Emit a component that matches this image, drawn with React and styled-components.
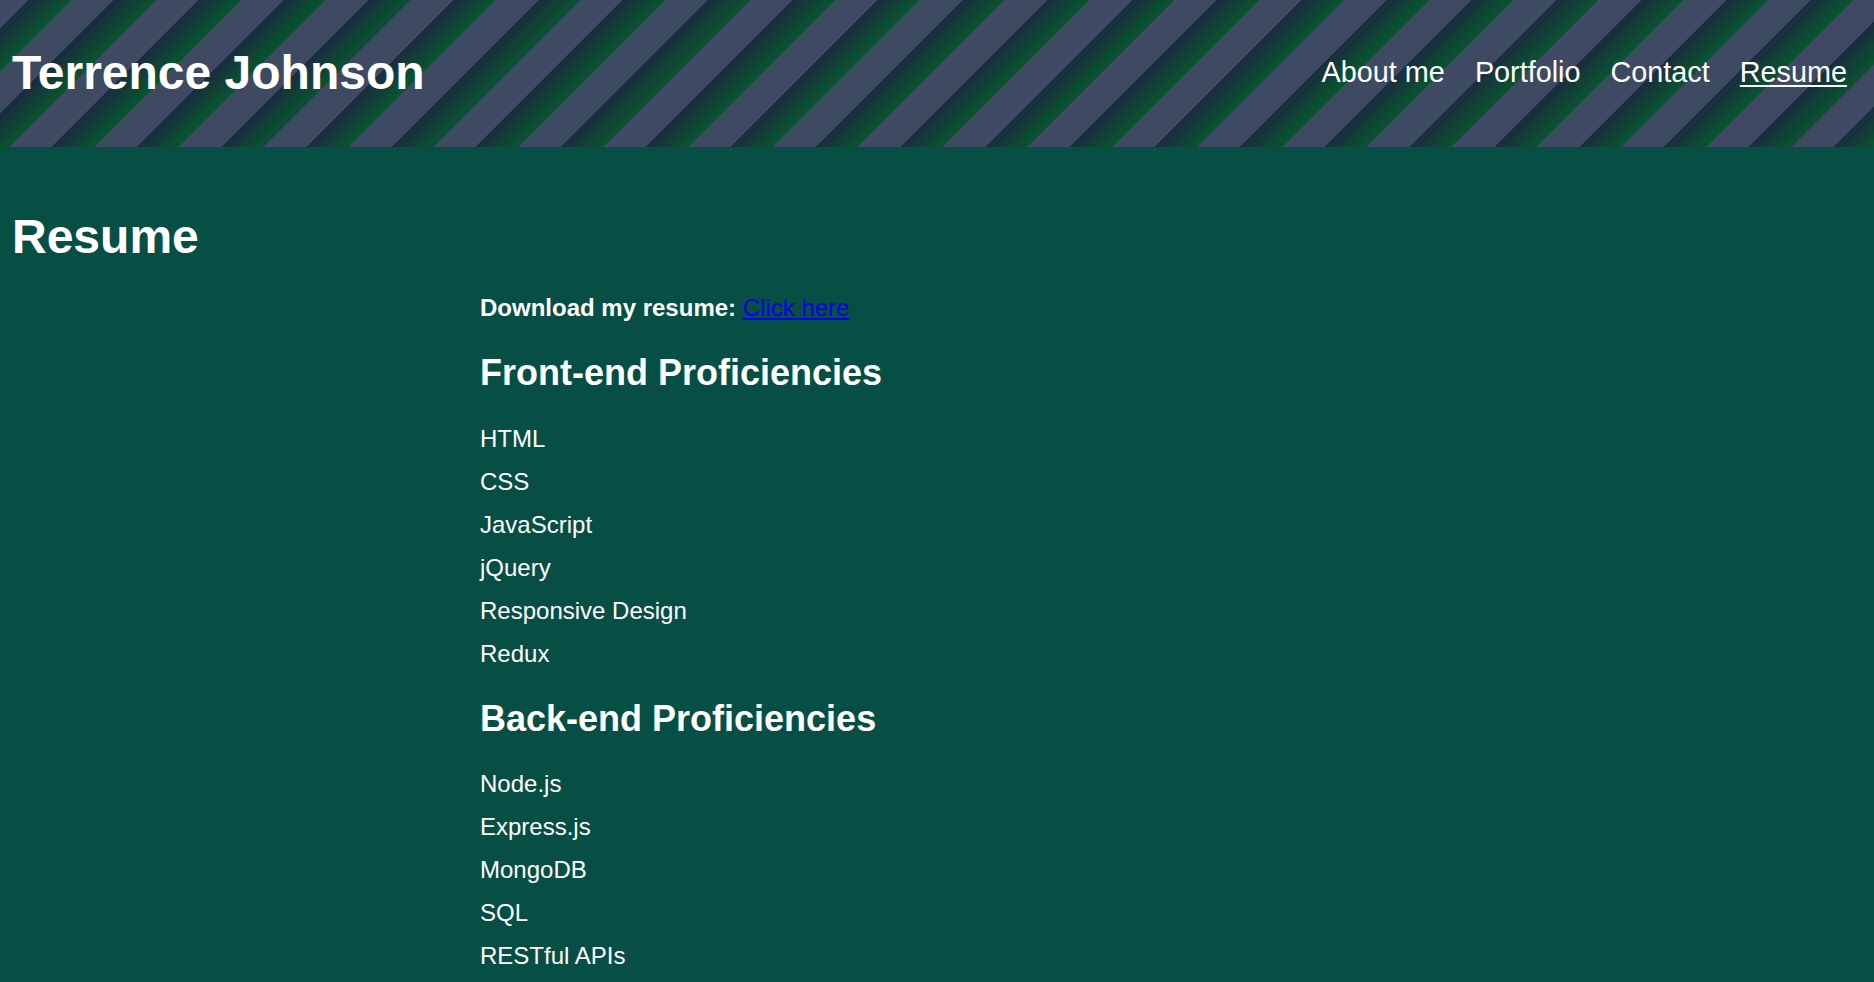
import React from 'react'
import styled, { createGlobalStyle } from 'styled-components'

const GlobalStyle = createGlobalStyle`
  html, body {
    margin: 0;
    padding: 0;
    background-color: #074e44;
    color: #ffffff;
    font-family: "Liberation Sans", Arial, sans-serif;
  }
`

// diagonal stripes: slate band, then navy fading into green
const Header = styled.header`
  display: flex;
  justify-content: space-between;
  align-items: center;
  box-sizing: border-box;
  height: 147px;
  padding: 0 12px 3px 12px;
  background: repeating-linear-gradient(
    135deg,
    #3d4a62 0px,
    #3d4a62 20.5px,
    #1b2b3f 20.5px,
    #07552f 50.5px,
    #3d4a62 50.5px,
    #3d4a62 60px
  );
`

const SiteTitle = styled.h1`
  margin: 0;
  font-size: 48px;
  line-height: 55px;
  font-weight: bold;
`

const NavList = styled.ul`
  display: flex;
  gap: 30px;
  list-style: none;
  margin: 0;
  padding: 0 15px 0 0;
`

const NavLink = styled.a`
  color: #ffffff;
  font-size: 28.8px;
  line-height: 33px;
  text-decoration: ${props => (props.$active ? 'underline' : 'none')};
  text-underline-offset: 3px;
  cursor: pointer;
`

const Main = styled.main`
  padding: 0 12px 40px 12px;
`

const PageTitle = styled.h1`
  margin: 62px 0 0 0;
  font-size: 48px;
  line-height: 55px;
  font-weight: bold;
`

const Content = styled.section`
  margin-left: 468px;
`

const Download = styled.p`
  margin: 30px 0 0 0;
  font-size: 24px;
  line-height: 28px;
  font-weight: bold;
`

const ResumeLink = styled.a`
  color: #0000ee;
  font-weight: normal;
  text-decoration: underline;
`

const SectionTitle = styled.h2`
  margin: ${props => props.$top}px 0 0 0;
  font-size: 36px;
  line-height: 41px;
  font-weight: bold;
`

const SkillList = styled.ul`
  list-style: none;
  margin: ${props => props.$top}px 0 0 0;
  padding: 0;
`

const SkillItem = styled.li`
  font-size: 24px;
  line-height: 43px;
`

const navItems = ['About me', 'Portfolio', 'Contact', 'Resume']

const frontEnd = ['HTML', 'CSS', 'JavaScript', 'jQuery', 'Responsive Design', 'Redux']
const backEnd = ['Node.js', 'Express.js', 'MongoDB', 'SQL', 'RESTful APIs']

export default function App() {
  return (
    <>
      <GlobalStyle />
      <Header>
        <SiteTitle>Terrence Johnson</SiteTitle>
        <nav>
          <NavList>
            {navItems.map(item => (
              <li key={item}>
                <NavLink $active={item === 'Resume'}>{item}</NavLink>
              </li>
            ))}
          </NavList>
        </nav>
      </Header>
      <Main>
        <PageTitle>Resume</PageTitle>
        <Content>
          <Download>
            Download my resume: <ResumeLink href="#">Click here</ResumeLink>
          </Download>
          <SectionTitle $top={30}>Front-end Proficiencies</SectionTitle>
          <SkillList $top={24}>
            {frontEnd.map(skill => (
              <SkillItem key={skill}>{skill}</SkillItem>
            ))}
          </SkillList>
          <SectionTitle $top={23}>Back-end Proficiencies</SectionTitle>
          <SkillList $top={23}>
            {backEnd.map(skill => (
              <SkillItem key={skill}>{skill}</SkillItem>
            ))}
          </SkillList>
        </Content>
      </Main>
    </>
  )
}
